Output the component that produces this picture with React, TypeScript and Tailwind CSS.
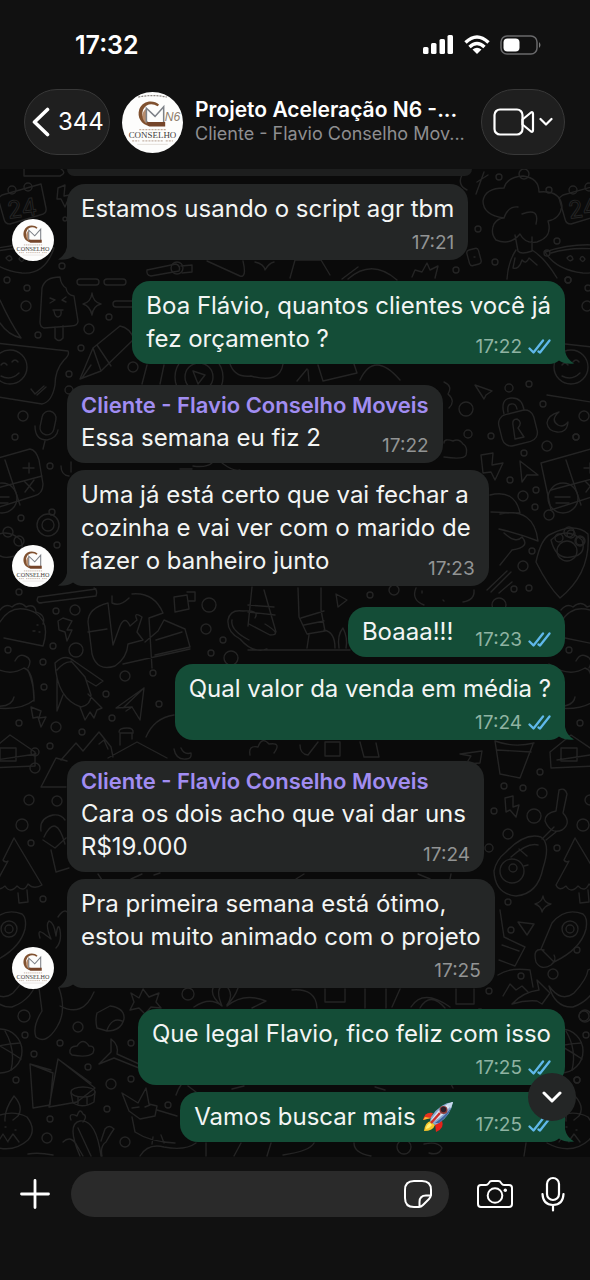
import React from "react";

function Logo({ badge = false, className }: { badge?: boolean; className: string }) {
  return (
    <svg viewBox="0 0 60 60" className={className} role="img" aria-label="Conselho Moveis">
      <circle cx="30" cy="30" r="30" fill="#fdfdfc" />
      {badge && <path d="M16 5Q30 2 44 5" stroke="#8b8580" strokeWidth="1.2" strokeDasharray="2 1" fill="none" />}
      <path d="M36.500 12.500C31 7 20 8.500 17 17C14.500 25 19 32 27 33.500V30C21 28 18.500 22 21 17C23.500 11.500 30 10.500 35 14Z" fill="#80512f" />
      <path d="M23 17C19 21 19 27 24 31V16Z" fill="#b88d6d" />
      <path d="M24 30V16L32.500 24L41 14.500V30" stroke="#7d8187" strokeWidth="1.500" fill="none" />
      <path d="M25 29.500H42.500V34H27Q24 33 25 29.500Z" fill="#75452a" />
      {badge && (
        <text x="42" y="29" fontSize="12" fontStyle="italic" fill="#8f7d6d" fontFamily="Liberation Sans, sans-serif">
          N6
        </text>
      )}
      <path d="M17 37H43" stroke="#c4ae9e" strokeWidth="1.200" strokeDasharray="2 1" />
      <text x="30" y="45" textAnchor="middle" fontSize="8.800" fill="#3f3c3b" fontFamily="Liberation Serif, serif">
        CONSELHO
      </text>
      <path d="M10 48H17M43 48H50M20 48H40" stroke="#c5b3a5" strokeWidth="1.200" strokeDasharray="2 1" />
      <path d="M15 51.500H45" stroke="#ded7d2" strokeWidth=".8" />
    </svg>
  );
}

function EdgeDoodles() {
  return (
    <>
      <path d="M2 195L41 184L46 208Q47 214 40 215L10 224Q5 224 4 219L-2 198Z" />
      <circle cx="12" cy="190" r="4" />
      <circle cx="28" cy="187" r="4" />
      <text x="7" y="217" fontSize="24" strokeWidth="1" fontFamily="Inter, sans-serif" transform="rotate(-8 20 208)">24</text>
      <path d="M-16 252Q20 240 54 248Q45 275 22 273Q-5 270 -16 252ZM-10 253Q15 245 48 251M6 258q4-5 6 1q-3 4-6-1M19 259q2-5 5 0q-2 5-5 0" />
      <path d="M-14 342L68 351Q70 355 64 360Q55 370 55 385Q52 402 42 404L-14 395" />
      <circle cx="10" cy="367" r="17" />
      <path d="M1 365q3-4 6 0M12 362q3-4 6 0M1 376q10 5 18-3M31 389l4 5 9-8M37 395l9-8" />
      <path d="M-20 463L30 449Q36 450 39 460L43 484Q43 494 34 496L-10 510ZM5 460L20 505M-10 490L42 476M23 468h11M29 463v10M24 481l10 10M34 480l-9 12" />
      <circle cx="2" cy="498" r="15" />
      <path d="M-6 497h15M-5 503h13" />
      <path d="M-10 540Q5 526 21 540Q26 555 10 557Q-5 560-10 540" />
      <circle cx="8" cy="532" r="5" /><circle cx="19" cy="541" r="5" />
      <path d="M0 622Q12 602 34 612Q51 622 43 646L4 638M0 610q6-7 12-3q8-7 14 0q9-4 10 5q10 3 7 12M33 631h2M39 632h1M37 625h1" />
      <path d="M-12 664Q8 678 24 668Q31 670 33 685L34 700Q20 712-12 707M15 661q4-8 10-5q8 3 3 12M28 670q7 18 6 31M-8 706q20 2 22-9" />
      <path d="M-11 752L10 735L35 752V766L-10 768ZM-4 760L36 754M0 748h16v13H0z" />
      <circle cx="35" cy="752" r="4" /><circle cx="35" cy="768" r="5" />
      <path d="M14 838L42 885Q34 890 28 884Q24 893 17 886Q10 894 5 886Q-2 892-5 885L8 861Q5 863 3 860ZM18 893l1 10 9-1-1-12" />
      <path d="M-9 923Q4 907 22 914Q27 918 25 929Q20 949-7 962L-20 949ZM-17 950q-12-3-8 12q5 9 15 3q6-5 3-10" />
      <circle cx="9" cy="929" r="8" /><circle cx="9" cy="929" r="4" />
      <path d="M-12 986Q0 1003 13 993Q26 979 27 970Q39 965 38 976Q34 999 12 1007Q-6 1008-12 986" />
      <circle cx="0" cy="1051" r="22" />
      <path d="M-18 1051Q0 1044 20 1043M5 1031Q16 1050 11 1070M-16 1038Q0 1045 21 1059" />
      <path d="M5 1121Q4 1110 14 1096Q24 1107 18 1116L13 1120M-12 1120Q10 1108 27 1117Q37 1130 28 1140Q10 1156-14 1143M-2 1142l5-8 5 8M8 1141l5-7 6 8M5 1127h1M15 1130h1" />
      <circle cx="7" cy="280" r="3" /><circle cx="27" cy="288" r="3" /><circle cx="26" cy="306" r="5" />
      <circle cx="38" cy="335" r="3" /><circle cx="23" cy="416" r="5" /><circle cx="15" cy="437" r="3" />
      <circle cx="8" cy="650" r="3" /><circle cx="19" cy="723" r="3" /><circle cx="29" cy="800" r="5" /><circle cx="22" cy="825" r="6" />
      <circle cx="24" cy="1016" r="6" /><circle cx="25" cy="1035" r="3" /><circle cx="16" cy="1080" r="3" /><circle cx="34" cy="1054" r="3" />
    </>
  );
}

const dots: [number, number, number][] = [
  [62, 266, 3], [65, 219, 2], [109, 317, 3], [89, 329, 5], [81, 348, 3], [69, 374, 3], [69, 390, 4], [133, 367, 5], [50, 466, 3],
  [52, 512, 3], [21, 518, 3], [48, 525, 11], [48, 525, 6], [57, 545, 3], [19, 592, 3], [56, 611, 3], [75, 610, 5], [53, 646, 3],
  [76, 650, 7], [43, 662, 3], [44, 687, 3], [125, 676, 5], [153, 673, 3], [106, 694, 3], [159, 704, 3], [112, 718, 3], [56, 727, 5],
  [82, 732, 3], [50, 746, 3], [57, 801, 5], [31, 843, 3], [43, 899, 3], [78, 1027, 5], [60, 1043, 3], [88, 1067, 3], [131, 1043, 3],
  [111, 1084, 5], [131, 1079, 3], [107, 1109, 3], [50, 1119, 3], [47, 1138, 5], [125, 1142, 5], [168, 1105, 3], [188, 994, 6],
  [524, 174, 5], [499, 177, 3], [478, 229, 3], [549, 190, 3], [557, 241, 3], [547, 253, 3], [495, 262, 3], [456, 270, 3],
  [568, 280, 3], [509, 388, 4], [529, 384, 3], [466, 409, 7], [543, 404, 3], [468, 434, 4], [491, 436, 3], [547, 446, 5],
  [524, 453, 3], [576, 437, 3], [510, 480, 3], [523, 496, 5], [536, 490, 3], [535, 507, 3], [549, 515, 5], [532, 551, 3],
  [523, 566, 5], [514, 589, 3], [529, 588, 3], [499, 605, 7], [495, 629, 5], [513, 640, 3], [209, 605, 7], [206, 629, 5],
  [223, 640, 3], [211, 653, 3], [231, 658, 7], [370, 595, 3], [394, 590, 5], [504, 786, 3], [523, 788, 3], [542, 793, 5],
  [540, 772, 3], [494, 811, 3], [534, 816, 7], [508, 834, 5], [489, 848, 4], [557, 848, 3], [508, 902, 3], [511, 930, 3],
  [553, 974, 5], [521, 976, 3], [489, 991, 3], [577, 950, 3], [577, 1080, 3], [584, 1016, 5], [404, 1147, 7], [480, 1012, 3],
];

function Wallpaper() {
  return (
    <svg
      aria-hidden="true"
      viewBox="0 169 590 988"
      preserveAspectRatio="xMidYMid slice"
      className="absolute inset-0 h-full w-full"
      fill="none"
      stroke="#242424"
      strokeWidth="1.4"
      strokeLinecap="round"
      strokeLinejoin="round"
    >
      <EdgeDoodles />
      <g transform="translate(561 0)"><EdgeDoodles /></g>
      {dots.map(([x, y, r], i) => <circle key={i} cx={x} cy={y} r={r} />)}

      <path d="M24 169V176H60Q67 173 61 169M58 188L65 185L64 196L70 195L65 207L61 199L57 199Z" />
      <path d="M40 322L42 288Q45 277 60 277Q61 285 66 288Q67 295 74 296L78 321Q78 326 71 326L44 328Q40 327 40 322M55 327V338Q59 343 63 338V326M50 298l5 2-5 3M66 297l-4 3 4 2M53 310h10M54 311q1 6 4 6q4-1 3-6" />
      <path d="M92 293Q93 302 101 304Q93 306 92 315Q90 306 83 304Q91 302 92 293Z" />
      <rect x="77" y="279" width="22" height="6" rx="3" /><rect x="104" y="279" width="22" height="6" rx="3" /><rect x="113" y="301" width="28" height="6" rx="3" />
      <path d="M0 300Q10 322 21 338Q8 335 0 323M80 379L93 348L120 326Q130 328 134 339L101 371L80 379ZM93 348L101 371M82 378l9-13M97 345l14 21" />
      <rect x="41" y="411" width="14" height="24" rx="7" transform="rotate(12 48 423)" /><path d="M35 426Q35 440 47 440Q57 438 58 430M45 441l-2 8" />
      <path d="M147 270L176 264Q181 266 179 271L151 276Q146 275 147 270M181 266L192 265V272L182 273" /><circle cx="177" cy="268" r="6" />
      <path d="M207 261L240 276Q247 278 243 261M255 262Q264 264 265 270Q269 263 274 262M290 278L295 260L321 260L330 275" />
      <path d="M342 279L358 267M348 279Q372 258 397 280M412 277L415 270L422 272L427 263L430 270L438 266L435 278" />
      <path d="M147 365L142 384M164 365L160 384" /><circle cx="199" cy="377" r="24" /><circle cx="199" cy="377" r="14" /><path d="M193 371l12 4-7 9Z" />
      <path d="M230 364Q235 378 251 376Q280 384 283 364M318 365l5 16 34-8-4-12M360 380Q374 350 400 380M297 381l10-12M309 381l-1-11" />
      <path d="M477 182L488 175M476 194L484 172M462 175q-5 10 5 15" />
      <path d="M504 218Q483 215 483 201Q485 188 504 188Q507 177 523 176Q539 178 539 192Q560 190 562 206Q560 219 548 221Q553 237 537 242Q525 244 520 234Q510 246 496 240Q490 233 494 224Q498 218 504 218M504 218Q508 206 518 207M522 214Q540 207 536 224M515 235L518 251Q521 255 532 251V237M516 250Q508 262 507 279M532 250Q545 258 557 278M515 258L513 268Q519 270 522 260Q526 265 529 258L537 265" />
      <rect x="468" y="249" width="12" height="16" rx="3" transform="rotate(-15 474 257)" /><path d="M474 257h1" />
      <path d="M475 385L492 391L486 395L484 399Z" />
      <rect x="500" y="412" width="36" height="32" rx="9" transform="rotate(-14 518 428)" /><path d="M504 414Q500 399 511 398Q522 397 524 410M508 412Q507 404 511 404Q516 403 517 409M513 425q-1-6 4-6q6 3 1 9l6 9-9 2Z" />
      <path d="M559 412Q550 420 558 425Q563 428 568 422Q567 433 557 432Q548 431 547 423Q548 415 559 412M444 382q9 4 4 12q8 7 1 14M444 443Q444 438 453 441Q459 438 463 444Q468 447 466 455Q464 460 444 457" />
      <path d="M481 455L493 453L492 465L503 463L495 480L491 472L483 473ZM520 461L538 475L527 475L522 482Z" />
      <path d="M180 469h12M193 466q13 2 19-3M222 463q12 9 18 7M61 466Q61 475 69 476M71 462v10" />
      <path d="M490 495Q515 489 520 513L491 512M500 514Q534 507 538 541Q520 534 499 529M504 533q12 11 18 4q9 10-10 13L500 565M487 590l20-19M491 592l20-20M499 593l13-11" />
      <path d="M536 562Q541 538 551 534Q575 522 588 534Q591 573 560 598Q548 586 536 562" /><circle cx="567" cy="551" r="10" /><circle cx="559" cy="538" r="4" /><circle cx="571" cy="534" r="4" /><circle cx="580" cy="541" r="4" />
      <path d="M38 597L96 589M39 603L96 596Q98 590 94 588M38 597Q35 603 42 603" />
      <path d="M58 621L63 618L72 621L67 630H72L67 641L65 632L59 630Z" />
      <path d="M88 622Q88 608 108 603L113 645L120 626Q125 615 130 626L137 620Q133 611 142 617L137 632L143 640L128 644Q127 658 115 666Q97 672 92 654L88 622M88 632L107 629M112 596V603Q120 607 129 598M132 594Q154 592 163 613L149 618L152 668M145 642L158 631L164 620L185 629L190 647L155 655M123 664L190 649M156 640L182 632" />
      <path d="M174 597L187 595L189 609L175 612ZM187 592H195V601H188" />
      <path d="M252 587L248 626M264 590L276 632M248 605L274 607M248 612L275 615M228 620Q230 609 243 611Q260 610 255 618M228 620Q227 632 240 639Q253 654 267 649M265 624Q283 635 270 635L249 624M248 650H350M249 640Q230 630 232 620" />
      <path d="M298 588L299 617L307 634L325 631L321 610L321 588M301 618L324 611M304 625L324 621M309 635L307 648M324 630Q335 632 335 648M339 648q-2-13 4-20q5 10 3 20M336 594l11 6-9 7Z" />
      <path d="M416 588Q411 600 424 605M422 591v2M443 600l1 1M463 602q12-2 11-12" />
      <path d="M55 663Q65 653 74 661L103 681L96 686L86 680M55 663Q57 699 81 707Q91 705 91 695L85 677L71 661M57 670Q65 661 71 662M57 677V711L63 695M80 707L85 720L90 712L94 718L97 710L102 708L88 694" />
      <path d="M116 708L144 688L140 720L132 707ZM144 688L123 708M132 707L126 711" />
      <path d="M31 707L41 711L39 718L46 717L41 727L38 717L33 718Z" />
      <path d="M61 760L76 743L83 751L99 732L111 747L113 757M99 744l5-4 4 9M108 758L137 742L167 758M120 745V733H132V739M119 732q0-4 8-4q7 0 6 5" />
      <path d="M146 737Q154 718 174 715" /><path d="M174 749q2 11 12 10q6 0 5-6q-7 2-10-5M250 755q-2-10 8-8q4-11 11-3q13-2 5 9" />
      <path d="M41 787L56 758L67 761M41 787H66M41 831Q39 818 53 815Q61 814 65 820M44 837Q56 812 65 844M43 840l12 8 11-10M51 850l5 22 13-4" />
      <path d="M300 745Q300 754 308 755L318 742M325 742h15v14h-15zM360 742l4 15h15l-3-14M466 764l5-8-11-2 22-3-2 12Z" />
      <path d="M495 741L500 774L520 778L533 744M497 750L531 752M495 741q19 7 39 2" />
      <path d="M505 798L513 796L513 807L519 805L516 817L510 810L506 812Z" />
      <path d="M559 790Q565 787 567 794L563 813Q572 823 562 830Q551 835 545 821Q545 813 556 811ZM542 839L554 827M546 840L556 832" />
      <path d="M506 852Q525 832 541 837Q551 844 543 868Q538 894 516 896Q495 894 494 871Q496 860 506 852M511 857Q528 842 538 845M519 849l8 7M524 866l4-1" /><circle cx="512" cy="871" r="12" /><circle cx="513" cy="868" r="4" />
      <path d="M543 896Q544 903 551 904Q544 906 542 912Q541 906 535 904Q542 902 543 896ZM518 922L534 924L527 935Z" />
      <path d="M500 910L504 937L525 947L515 966L499 960M502 945L519 951M498 975Q510 967 530 970L533 987M503 996L510 984L516 990L522 986L528 992M512 1004Q523 992 539 990L537 980L550 993L542 1004L537 1001Q525 1000 512 1004" />
      <path d="M98 874L102 880M131 879L142 874M154 875l6-2M296 879l8-5M418 874L430 879M451 874L450 879M58 917Q66 905 70 917M40 938Q37 929 43 933L51 939Q45 925 49 921Q54 922 56 936Q58 921 60 930Q62 942 56 948" />
      <path d="M39 988L42 1011Q32 1027 36 1037Q46 1045 57 1027Q67 1011 59 988M60 1006Q83 1018 94 992M97 1013L110 1006Q125 1008 124 1019Q121 1031 107 1031L97 1028Q95 1020 97 1013M107 1030Q112 1017 122 1021" />
      <path d="M131 993l8 5 4-9 6 8 10-4-3 9 5 6-10-1-6 7-6-6-9 2 4-8ZM194 1007Q210 996 222 1006Q210 996 213 988M222 1006Q214 987 225 985Q235 993 227 1005Q235 997 238 988M227 1006Q244 992 266 1001L252 1008" />
      <path d="M292 990q24-2 25 18M325 989V1002H345V989M365 989V1008M386 989V1008M392 1007L400 989M411 1007Q423 988 450 1007M420 1008Q430 991 445 1008M456 989V1004H474V989" />
      <path d="M70 1053Q69 1046 77 1046Q83 1037 89 1046Q96 1046 93 1053Q88 1058 72 1055Z" />
      <path d="M99 1064L111 1052V1039Q119 1045 117 1054L139 1064M99 1064L114 1058L139 1068" />
      <path d="M30 1064L53 1073L50 1105L33 1108ZM30 1064L51 1070M58 1059L95 1088L77 1102L49 1107ZM58 1059L91 1083" />
      <ellipse cx="83" cy="1092" rx="12" ry="5" /><path d="M71 1093L73 1103Q83 1109 94 1102L95 1092M78 1097v7M87 1097v7" />
      <path d="M122 1093L138 1103L146 1088L149 1104L157 1106L155 1116L140 1119L129 1111ZM157 1110L177 1116M132 1117L135 1132Q150 1142 175 1143M153 1137l-1 7M161 1135l3 8M132 1108l7-1M145 1107l5-2" />
      <path d="M63 1142Q70 1135 76 1144L83 1156M102 1156Q100 1146 106 1142Q111 1133 114 1129Q109 1124 105 1129L101 1141M80 1156Q66 1124 80 1121Q96 1119 101 1156M78 1128L91 1156M71 1120Q68 1112 77 1116Q80 1107 83 1114Q88 1116 83 1122M140 1156Q148 1143 164 1147Q185 1151 196 1143M206 1143V1156M241 1143L234 1156M271 1143L267 1156M28 1154q10-2 25 1M283 1155q27-4 31-12M354 1143q0 10 17 13M424 1144q14-3 18 4q-3 8-13 5M526 1143L524 1156" />
      <path d="M176 1095q2-6 5-10M188 1086l8 6M232 1089l12-3M375 1087l10 3M453 1088l-2-4" />
    </svg>
  );
}

function Ticks() {
  return (
    <svg viewBox="0 0 23 16" className="h-4 w-[23px]" fill="none" stroke="#5fb8ea" strokeWidth="2.300" strokeLinecap="round" strokeLinejoin="round" role="img" aria-label="Lida">
      <path d="M1.500 9.500L5.500 13.500L15 1.500M10.500 12.500L12 13.500L21.500 1.500" />
    </svg>
  );
}

function Rocket() {
  return (
    <svg viewBox="0 0 32 32" className="inline-block h-8 w-8" role="img" aria-label="🚀">
      <path d="M11 12Q3 10 1 19L9 17Z" fill="#e9321d" /><path d="M20 20Q23 27 14 31L13 23Z" fill="#e5221a" />
      <path d="M3 16L1 19L9 17Z" fill="#f7b730" />
      <path d="M9 20Q3 21 2 30Q11 30 13 24Z" fill="#f7c52b" /><path d="M8 22Q4 24 4 28Q8 27 10 24Z" fill="#fff073" />
      <path d="M31 1Q18 2 9 16L8 20L13 24L17 22Q29 14 31 1Z" fill="#8aa9cf" />
      <path d="M31 1Q20 4 12 15L9 19L11 21Q23 14 31 1Z" fill="#d9e5f1" />
      <path d="M31 1L25 3Q26 6 29 7Z" fill="#c8d9ec" /><path d="M17 22Q27 14 29 7Q23 15 13 22Z" fill="#3f65a0" />
      <circle cx="21.500" cy="9" r="4" fill="#8e3a37" /><circle cx="21.500" cy="8.500" r="2.700" fill="#281e2b" />
      <path d="M9 22L18 12" stroke="#ca302c" strokeWidth="2.500" />
    </svg>
  );
}

type Message = {
  lines: React.ReactNode[];
  time: string;
  mine?: boolean;
  name?: boolean;
  below?: boolean;
  tail?: boolean;
};

function Bubble({ lines, time, mine, name, below, tail }: Message) {
  const stamp = (
    <span className={`flex h-4 items-center justify-end gap-1.5 text-[19px] leading-4 ${mine ? "text-[#8fb3a2]" : "text-[#929494]"}`}>
      <time>{time}</time>
      {mine && <Ticks />}
    </span>
  );
  const last = lines.length - 1;
  return (
    <div className={`flex items-end ${mine ? "justify-end pr-[25px]" : "gap-[13px] pl-3"}`}>
      {!mine && (tail ? <Logo className="-mb-px size-[42px] shrink-0" /> : <span className="w-[42px] shrink-0" />)}
      <article className={`relative rounded-[18px] px-3.5 pt-2 pb-[9px] ${mine ? "bg-[#144d37]" : "bg-[#242626]"}`}>
        {tail && (
          <svg viewBox="0 0 26 18" className={`absolute bottom-0 h-[18px] w-[26px] ${mine ? "-right-[9px] fill-[#144d37]" : "-left-[9px] -scale-x-100 fill-[#242626]"}`} aria-hidden="true">
            <path d="M0 18Q7 18 11 14.500Q17 18.500 26 17.500Q18.500 13 17 5V0H0Z" />
          </svg>
        )}
        {name && <h2 className="mb-1 text-[22px] leading-6 font-semibold text-[#a18df2]">Cliente - Flavio Conselho Moveis</h2>}
        <div className="relative text-2xl leading-[33px] whitespace-nowrap text-[#f3f5f4]">
          {lines.map((line, i) =>
            i === last && !below ? (
              <div key={i} className="flex items-end justify-between gap-[22px]">
                <p>{line}</p>
                {stamp}
              </div>
            ) : (
              <p key={i} className={mine || below ? "" : "pr-1"}>{line}</p>
            ),
          )}
        </div>
        {below && <div className="mt-2.5">{stamp}</div>}
      </article>
    </div>
  );
}

const groups: Message[][] = [
  [{ lines: ["Estamos usando o script agr tbm"], time: "17:21", below: true, tail: true }],
  [{ lines: ["Boa Flávio, quantos clientes você já", "fez orçamento ?"], time: "17:22", mine: true, tail: true }],
  [
    { lines: ["Essa semana eu fiz 2"], time: "17:22", name: true },
    { lines: ["Uma já está certo que vai fechar a", "cozinha e vai ver com o marido de", "fazer o banheiro junto"], time: "17:23", tail: true },
  ],
  [
    { lines: ["Boaaa!!!"], time: "17:23", mine: true },
    { lines: ["Qual valor da venda em média ?"], time: "17:24", mine: true, below: true, tail: true },
  ],
  [
    { lines: ["Cara os dois acho que vai dar uns", "R$19.000"], time: "17:24", name: true },
    { lines: ["Pra primeira semana está ótimo,", "estou muito animado com o projeto"], time: "17:25", below: true, tail: true },
  ],
  [
    { lines: ["Que legal Flavio, fico feliz com isso"], time: "17:25", mine: true, below: true },
    { lines: [<span className="flex items-center gap-1.5">Vamos buscar mais <Rocket /></span>], time: "17:25", mine: true, tail: true },
  ],
];

export default function App() {
  return (
    <div className="flex min-h-screen flex-col overflow-x-hidden bg-[#111111] font-['Inter','Liberation_Sans',sans-serif] text-white">
      <header className="pb-3.5">
        <div className="flex h-[89px] items-center justify-between pr-12 pl-[75px]">
          <time className="text-[25px] leading-8 font-semibold">17:32</time>
          <div className="flex items-center gap-2.5">
            <svg viewBox="0 0 31 20" className="h-5 w-[31px] fill-white" role="img" aria-label="Sinal">
              <rect x="0" y="12" width="5.500" height="7" rx="1.500" /><rect x="8" y="8" width="5.500" height="11" rx="1.500" />
              <rect x="16.500" y="4" width="5.500" height="15" rx="1.500" /><rect x="24.500" y="0" width="5.500" height="19" rx="1.500" />
            </svg>
            <svg viewBox="0 0 26 20" className="h-5 w-[26px]" fill="none" stroke="white" strokeWidth="3.400" role="img" aria-label="Wi-Fi">
              <path d="M1.500 7.500Q13 -3.500 24.500 7.500M5.500 12Q13 5 20.500 12" /><path d="M8.500 14.500Q13 11 17.500 14.500L13 19Z" fill="white" stroke="none" />
            </svg>
            <svg viewBox="0 0 42 20" className="h-5 w-[42px]" role="img" aria-label="Bateria">
              <rect x="1" y="1" width="36" height="18" rx="6" fill="none" stroke="#69696b" strokeWidth="1.500" />
              <rect x="3.500" y="3.500" width="16" height="13" rx="4" fill="white" /><path d="M39 7Q42 10 39 13Z" fill="#777" />
            </svg>
          </div>
        </div>
        <div className="flex items-center pr-[25px] pl-6">
          <button aria-label="Voltar, 344 não lidas" className="flex h-[66px] w-[86px] shrink-0 items-center gap-2 rounded-full border border-[#383838] bg-[#1f1f1f] pl-[7px] text-2xl">
            <svg viewBox="0 0 18 30" className="h-[30px] w-[18px]" fill="none" stroke="white" strokeWidth="3.600" strokeLinecap="round" strokeLinejoin="round">
              <path d="M15.500 2.500L2.500 15L15.500 27.500" />
            </svg>
            344
          </button>
          <Logo badge className="ml-3 size-[61px] shrink-0" />
          <div className="ml-3 min-w-0 flex-1 whitespace-nowrap">
            <h1 className="text-[21px] leading-6 font-semibold">Projeto Aceleração N6 -...</h1>
            <p className="text-lg leading-6 text-[#8e8e90]">Cliente - Flavio Conselho Mov...</p>
          </div>
          <button aria-label="Chamada de vídeo" className="flex h-[66px] w-[84px] shrink-0 items-center justify-center gap-1 rounded-full border border-[#383838] bg-[#1f1f1f]">
            <svg viewBox="0 0 42 28" className="h-7 w-[42px]" fill="none" stroke="white" strokeWidth="2.200" strokeLinecap="round" strokeLinejoin="round">
              <rect x="1.500" y="1.500" width="28" height="25" rx="5.500" /><path d="M29.500 11.500L38 4.500Q40 3.500 40 6V22Q40 24.500 38 23.500L29.500 16.500Z" />
            </svg>
            <svg viewBox="0 0 14 10" className="h-2.5 w-3.5" fill="none" stroke="white" strokeWidth="2.200" strokeLinecap="round" strokeLinejoin="round"><path d="M1.500 2L7 7.500L12.500 2" /></svg>
          </button>
        </div>
      </header>

      <main className="relative flex-1 overflow-hidden bg-[#0a0a0a]">
        <Wallpaper />
        <div className="relative flex flex-col gap-[21px] pb-[15px]">
          <div className="-mb-[13px] ml-[67px] h-[7px] w-[405px] rounded-b-xl bg-[#1d1e1e]" />
          {groups.map((group, i) => (
            <section key={i} className="flex flex-col gap-[7px]">
              {group.map((message, j) => <Bubble key={j} {...message} />)}
            </section>
          ))}
        </div>
        <button aria-label="Ir para o fim" className="absolute right-3.5 bottom-9 flex size-12 items-center justify-center rounded-full bg-[#242626]">
          <svg viewBox="0 0 20 12" className="h-3 w-5" fill="none" stroke="white" strokeWidth="3" strokeLinecap="round" strokeLinejoin="round"><path d="M2 2L10 10L18 2" /></svg>
        </button>
      </main>

      <footer className="flex items-center pt-3.5 pr-[25px] pb-[63px] pl-5">
        <button aria-label="Anexar" className="shrink-0">
          <svg viewBox="0 0 30 30" className="size-[30px]" stroke="white" strokeWidth="2.800" strokeLinecap="round"><path d="M15 1.500V28.500M1.500 15H28.500" /></svg>
        </button>
        <div className="ml-[21px] flex h-[46px] min-w-0 flex-1 items-center rounded-full bg-[#2a2a2a] pr-[17px] pl-5">
          <input aria-label="Mensagem" className="min-w-0 flex-1 bg-transparent text-2xl outline-none" />
          <button aria-label="Figurinhas">
            <svg viewBox="0 0 28 28" className="size-7" fill="none" stroke="white" strokeWidth="2" strokeLinecap="round" strokeLinejoin="round">
              <path d="M15 27H10Q1 27 1 18V10Q1 1 10 1H18Q27 1 27 10V15Q27 17 25 19L19 25Q17 27 15 27ZM15.500 26.500V22Q15.500 15.500 22 15.500H27" />
            </svg>
          </button>
        </div>
        <button aria-label="Câmera" className="ml-7 shrink-0">
          <svg viewBox="0 0 36 30" className="h-[30px] w-9" fill="none" stroke="white" strokeWidth="2" strokeLinejoin="round">
            <path d="M4 6H9Q10.500 6 11.500 4.500L13 2.500Q13.500 2 15 2H21Q22.500 2 23 2.500L24.500 4.500Q25.500 6 27 6H32Q35 6 35 9V25Q35 28 32 28H4Q1 28 1 25V9Q1 6 4 6Z" />
            <circle cx="18" cy="16.500" r="7.300" /><circle cx="28.300" cy="11.300" r="1.700" fill="white" stroke="none" />
          </svg>
        </button>
        <button aria-label="Gravar áudio" className="ml-7 shrink-0">
          <svg viewBox="0 0 24 36" className="h-9 w-6" fill="none" stroke="white" strokeWidth="2.200" strokeLinecap="round">
            <rect x="6" y="2" width="12" height="22" rx="6" /><path d="M1.500 18Q2 29 12 29Q22 29 22.500 18M12 29V34.500" />
          </svg>
        </button>
      </footer>
    </div>
  );
}
